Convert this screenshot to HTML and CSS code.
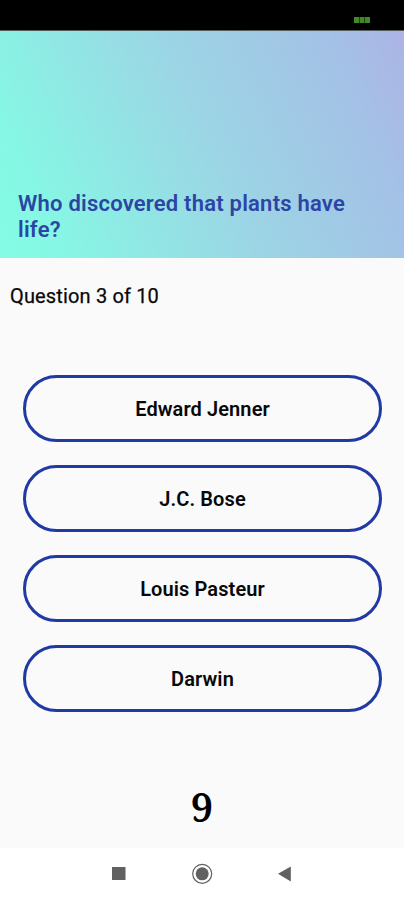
FILE: index.html
```
<!DOCTYPE html>
<html lang="en">
<head>
<meta charset="utf-8">
<title>Quiz</title>
<link rel="stylesheet" href="styles.css">
</head>
<body>
<div class="status"><svg class="battery" width="17" height="8" viewBox="0 0 17 8"><path d="M0 1h5v6H0zM5.500 1h5v6h-5zM11 1h5v6h-5z"/></svg></div>
<header class="hero"><h1 class="question">Who discovered that plants have life?</h1></header>
<main class="content">
<p class="progress">Question 3 of 10</p>
<div class="answers">
<button class="answer">Edward Jenner</button>
<button class="answer">J.C. Bose</button>
<button class="answer">Louis Pasteur</button>
<button class="answer">Darwin</button>
</div>
<div class="timer">9</div>
</main>
<nav class="nav">
<svg width="22" height="22" viewBox="0 0 22 22"><path d="M4 4h13.500v13H4z"/></svg>
<svg width="22" height="22" viewBox="0 0 22 22"><circle cx="11.200" cy="10.800" r="9.500" class="ring"/><circle cx="11.200" cy="10.800" r="6.500"/></svg>
<svg width="22" height="22" viewBox="0 0 22 22"><path d="M4 10.800 16.800 3.500v15z"/></svg>
</nav>
</body>
</html>
```
FILE: styles.css
```
* { box-sizing: border-box; }
body { margin: 0; width: 404px; height: 900px; display: flex; flex-direction: column; background: #fafafa; font-family: Roboto, sans-serif; color: #080808; overflow: hidden; }
.status { height: 31px; background: #000; border-bottom: 1px solid #555c60; display: flex; justify-content: flex-end; padding: 16px 33px 0 0; flex: none; }
.battery { fill: #3f8a26; }
.hero { height: 227px; flex: none; display: flex; align-items: flex-end; padding: 0 17px 15px 18px; background: linear-gradient(66deg, #83fce4 0%, #86f7e4 12%, #9cd5e5 52%, #a3c2e6 83%, #acb4e5 100%); }
.question { margin: 0; font-size: 22px; line-height: 26px; font-weight: 600; letter-spacing: .22px; color: #2c45a5; }
.content { flex: 1; display: flex; flex-direction: column; }
.progress { margin: 25px 0 0 10px; font-size: 20px; line-height: 26px; letter-spacing: .15px; -webkit-text-stroke: .25px #080808; }
.answers { display: flex; flex-direction: column; gap: 23px; margin: 66px 22px 0 23px; }
.answer { height: 67px; border: 3px solid #2039a3; border-radius: 34px; background: transparent; font: 600 20px Roboto, sans-serif; letter-spacing: .1px; color: #080808; padding: 0; }
.timer { margin-top: 70px; text-align: center; font: 600 40px/50px "Noto Serif", "DejaVu Serif", serif; color: #000; }
.nav { height: 52px; flex: none; background: #fff; display: flex; justify-content: center; align-items: center; gap: 61px; fill: #616161; }
.ring { fill: none; stroke: #616161; stroke-width: 1.2; }
```
